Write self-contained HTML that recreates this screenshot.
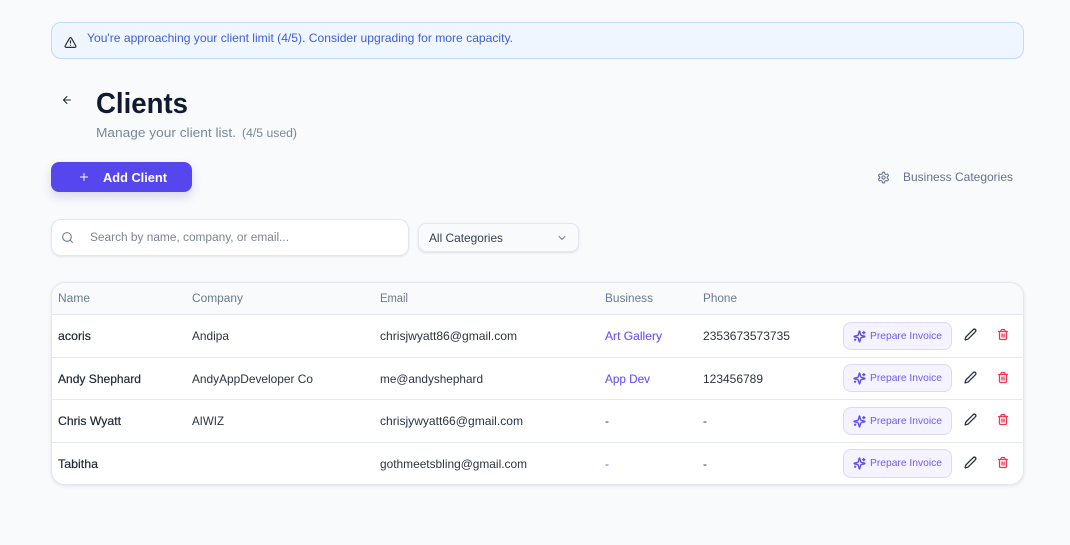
<!DOCTYPE html>
<html lang="en"><head><meta charset="utf-8"><title>Clients</title>
<style>
html,body{margin:0;padding:0;width:1070px;height:545px;overflow:hidden;background:#f9fafc}
body{position:relative;font-family:"Liberation Sans",sans-serif}
.b{position:absolute;box-sizing:border-box}
svg{position:absolute;left:0;top:0}
text{font-family:"Liberation Sans",sans-serif;font-size:12px;fill:#1f2937}
.h{font-size:11.5px;fill:#6b7a90}
.c{fill:#2b3442}
.n{fill:#1f2937;stroke:#1f2937;stroke-width:.2px}
.l{fill:#6a55f0;stroke:#6a55f0;stroke-width:.12px}
.p{font-size:10.5px;fill:#6d5cf0}
.i{fill:none;stroke-width:2;stroke-linecap:round;stroke-linejoin:round}
</style></head><body>
<div class="b" style="left:51px;top:22px;width:973px;height:37px;background:#eff6ff;border:1px solid #bfdbfe;border-radius:10px"></div>
<div class="b" style="left:51px;top:162px;width:141px;height:30px;background:#5646ee;border-radius:8px;box-shadow:0 5px 10px rgba(70,60,160,.18)"></div>
<div class="b" style="left:51px;top:219px;width:358px;height:37px;background:#fff;border:1px solid #e2e8f0;border-radius:10px;box-shadow:0 1px 2px rgba(30,41,59,.1)"></div>
<div class="b" style="left:418px;top:223px;width:161px;height:29px;background:#f9fafc;border:1px solid #e2e8f0;border-radius:8px;box-shadow:0 1px 2px rgba(30,41,59,.12)"></div>
<div class="b" style="left:51px;top:282px;width:973px;height:203px;background:#fff;border:1px solid #e2e8f0;border-radius:14px;box-shadow:0 1px 3px rgba(30,41,59,.12);overflow:hidden">
  <div class="b" style="left:0;top:0;width:100%;height:32px;background:#f8fafc;border-bottom:1px solid #e2e8f0"></div>
  <div class="b" style="left:0;top:74px;width:100%;height:1px;background:#e5e9f2"></div>
  <div class="b" style="left:0;top:116px;width:100%;height:1px;background:#e5e9f2"></div>
  <div class="b" style="left:0;top:159px;width:100%;height:1px;background:#e5e9f2"></div>
</div>
<div class="b" style="left:843px;top:322px;width:109px;height:28px;background:#f4f3ff;border:1px solid #ddd8fb;border-radius:8px"></div>
<div class="b" style="left:843px;top:364px;width:109px;height:28px;background:#f4f3ff;border:1px solid #ddd8fb;border-radius:8px"></div>
<div class="b" style="left:843px;top:407px;width:109px;height:28px;background:#f4f3ff;border:1px solid #ddd8fb;border-radius:8px"></div>
<div class="b" style="left:843px;top:449px;width:109px;height:29px;background:#f4f3ff;border:1px solid #ddd8fb;border-radius:8px"></div>

<svg width="1070" height="545" viewBox="0 0 1070 545" xmlns="http://www.w3.org/2000/svg">
<defs>
<symbol id="spark" viewBox="0 0 24 24"><path class="i" style="stroke-width:2.6" d="M9.937 15.5A2 2 0 0 0 8.5 14.063l-6.135-1.582a.5.5 0 0 1 0-.962L8.5 9.936A2 2 0 0 0 9.937 8.5l1.582-6.135a.5.5 0 0 1 .963 0L14.063 8.5A2 2 0 0 0 15.5 9.937l6.135 1.581a.5.5 0 0 1 0 .964L15.5 14.063a2 2 0 0 0-1.437 1.437l-1.582 6.135a.5.5 0 0 1-.963 0z M20 3v4 M22 5h-4 M4 17v2 M5 18H3" stroke="#5f50e6"/></symbol>
<symbol id="pen" viewBox="0 0 24 24"><path class="i" style="stroke-width:2.4" d="M21.174 6.812a1 1 0 0 0-3.986-3.987L3.842 16.174a2 2 0 0 0-.5.83l-1.321 4.352a.5.5 0 0 0 .623.622l4.353-1.32a2 2 0 0 0 .83-.497z" stroke="#2b3340"/></symbol>
<symbol id="trash" viewBox="0 0 24 24"><path class="i" style="stroke-width:2.7" d="M3 6h18 M19 6v14c0 1-1 2-2 2H7c-1 0-2-1-2-2V6 M8 6V4c0-1 1-2 2-2h4c1 0 2 1 2 2v2 M10 11v6 M14 11v6" stroke="#ee3a50"/></symbol>
</defs>

<svg x="64" y="36" width="13" height="13" viewBox="0 0 24 24"><path class="i" style="stroke-width:2.3" stroke="#2b3340" d="M21.73 18l-8-14a2 2 0 0 0-3.48 0l-8 14A2 2 0 0 0 4 21h16a2 2 0 0 0 1.73-3 M12 9v4 M12 17h.01"/></svg>
<text x="87" y="42" textLength="426" lengthAdjust="spacingAndGlyphs" style="fill:#3f5fd0">You're approaching your client limit (4/5). Consider upgrading for more capacity.</text>

<svg x="61" y="94" width="12" height="12" viewBox="0 0 24 24"><path class="i" stroke="#1f2937" d="M12 19l-7-7 7-7 M19 12H5"/></svg>
<text x="96" y="113" textLength="92" lengthAdjust="spacingAndGlyphs" style="font-size:29px;font-weight:700;fill:#111a2e">Clients</text>
<text x="96" y="137" textLength="140" lengthAdjust="spacingAndGlyphs" style="font-size:13px;fill:#7a8799">Manage your client list.</text>
<text x="242" y="137" textLength="55" lengthAdjust="spacingAndGlyphs" style="font-size:11.5px;fill:#7a8799">(4/5 used)</text>

<svg x="78" y="171" width="12" height="12" viewBox="0 0 24 24"><path class="i" stroke="#fff" d="M5 12h14 M12 5v14"/></svg>
<text x="103" y="182" textLength="64" lengthAdjust="spacingAndGlyphs" style="font-size:13px;font-weight:700;fill:#fff">Add Client</text>

<svg x="877" y="171" width="13" height="13" viewBox="0 0 24 24"><path class="i" stroke="#64748b" d="M12.22 2h-.44a2 2 0 0 0-2 2v.18a2 2 0 0 1-1 1.73l-.43.25a2 2 0 0 1-2 0l-.15-.08a2 2 0 0 0-2.73.73l-.22.38a2 2 0 0 0 .73 2.73l.15.1a2 2 0 0 1 1 1.72v.51a2 2 0 0 1-1 1.74l-.15.09a2 2 0 0 0-.73 2.73l.22.38a2 2 0 0 0 2.73.73l.15-.08a2 2 0 0 1 2 0l.43.25a2 2 0 0 1 1 1.73V20a2 2 0 0 0 2 2h.44a2 2 0 0 0 2-2v-.18a2 2 0 0 1 1-1.73l.43-.25a2 2 0 0 1 2 0l.15.08a2 2 0 0 0 2.73-.73l.22-.39a2 2 0 0 0-.73-2.73l-.15-.08a2 2 0 0 1-1-1.74v-.5a2 2 0 0 1 1-1.74l.15-.09a2 2 0 0 0 .73-2.73l-.22-.38a2 2 0 0 0-2.73-.73l-.15.08a2 2 0 0 1-2 0l-.43-.25a2 2 0 0 1-1-1.73V4a2 2 0 0 0-2-2z"/><circle class="i" stroke="#64748b" cx="12" cy="12" r="3"/></svg>
<text x="903" y="181" textLength="110" lengthAdjust="spacingAndGlyphs" style="fill:#64748b">Business Categories</text>

<svg x="61" y="231" width="13" height="13" viewBox="0 0 24 24"><circle class="i" stroke="#6b7a90" cx="11" cy="11" r="8"/><path class="i" stroke="#6b7a90" d="M21 21l-4.3-4.3"/></svg>
<text x="90" y="241" textLength="199" lengthAdjust="spacingAndGlyphs" style="font-size:11.5px;fill:#7b8494">Search by name, company, or email...</text>
<text x="429" y="242" textLength="74" lengthAdjust="spacingAndGlyphs" style="fill:#374151">All Categories</text>
<svg x="556" y="232" width="12" height="12" viewBox="0 0 24 24"><path class="i" stroke="#7b8494" d="M6 9l6 6 6-6"/></svg>

<text class="h" x="58" y="302" textLength="32" lengthAdjust="spacingAndGlyphs">Name</text>
<text class="h" x="192" y="302" textLength="51" lengthAdjust="spacingAndGlyphs">Company</text>
<text class="h" x="380" y="302" textLength="28" lengthAdjust="spacingAndGlyphs">Email</text>
<text class="h" x="605" y="302" textLength="48" lengthAdjust="spacingAndGlyphs">Business</text>
<text class="h" x="703" y="302" textLength="34" lengthAdjust="spacingAndGlyphs">Phone</text>

<text class="n" x="58" y="340" textLength="33" lengthAdjust="spacingAndGlyphs">acoris</text>
<text class="c" x="192" y="340" textLength="37" lengthAdjust="spacingAndGlyphs">Andipa</text>
<text class="c" x="380" y="340" textLength="137" lengthAdjust="spacingAndGlyphs">chrisjwyatt86@gmail.com</text>
<text class="l" x="605" y="340" textLength="57" lengthAdjust="spacingAndGlyphs">Art Gallery</text>
<text class="c" x="703" y="340" textLength="87" lengthAdjust="spacingAndGlyphs">2353673573735</text>

<text class="n" x="58" y="383" textLength="83" lengthAdjust="spacingAndGlyphs">Andy Shephard</text>
<text class="c" x="192" y="383" textLength="121" lengthAdjust="spacingAndGlyphs">AndyAppDeveloper Co</text>
<text class="c" x="380" y="383" textLength="103" lengthAdjust="spacingAndGlyphs">me@andyshephard</text>
<text class="l" x="605" y="383" textLength="45" lengthAdjust="spacingAndGlyphs">App Dev</text>
<text class="c" x="703" y="383" textLength="60" lengthAdjust="spacingAndGlyphs">123456789</text>

<text class="n" x="58" y="425" textLength="63" lengthAdjust="spacingAndGlyphs">Chris Wyatt</text>
<text class="c" x="192" y="425" textLength="32" lengthAdjust="spacingAndGlyphs">AIWIZ</text>
<text class="c" x="380" y="425" textLength="143" lengthAdjust="spacingAndGlyphs">chrisjywyatt66@gmail.com</text>
<text class="c" x="605" y="425">-</text>
<text class="c" x="703" y="425">-</text>

<text class="n" x="58" y="468" textLength="40" lengthAdjust="spacingAndGlyphs">Tabitha</text>
<text class="c" x="380" y="468" textLength="147" lengthAdjust="spacingAndGlyphs">gothmeetsbling@gmail.com</text>
<text class="l" x="605" y="468">-</text>
<text class="c" x="703" y="468">-</text>

<use href="#spark" x="853" y="330" width="13" height="13"/>
<text class="p" x="870" y="339" textLength="72" lengthAdjust="spacingAndGlyphs">Prepare Invoice</text>
<use href="#pen" x="964" y="328" width="13" height="13"/>
<use href="#trash" x="997" y="328" width="12" height="13"/>

<use href="#spark" x="853" y="372" width="13" height="13"/>
<text class="p" x="870" y="381" textLength="72" lengthAdjust="spacingAndGlyphs">Prepare Invoice</text>
<use href="#pen" x="964" y="371" width="13" height="13"/>
<use href="#trash" x="997" y="371" width="12" height="13"/>

<use href="#spark" x="853" y="415" width="13" height="13"/>
<text class="p" x="870" y="424" textLength="72" lengthAdjust="spacingAndGlyphs">Prepare Invoice</text>
<use href="#pen" x="964" y="413" width="13" height="13"/>
<use href="#trash" x="997" y="413" width="12" height="13"/>

<use href="#spark" x="853" y="457" width="13" height="13"/>
<text class="p" x="870" y="466" textLength="72" lengthAdjust="spacingAndGlyphs">Prepare Invoice</text>
<use href="#pen" x="964" y="456" width="13" height="13"/>
<use href="#trash" x="997" y="456" width="12" height="13"/>
</svg>
</body></html>
